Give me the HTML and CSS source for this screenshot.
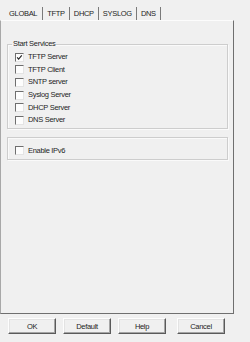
FILE: index.html
```html
<!DOCTYPE html>
<html>
<head>
<meta charset="utf-8">
<link rel="stylesheet" href="styles.css">
</head>
<body>
<div class="dlg">
  <div class="tabs">
    <span class="tab active">GLOBAL</span>
    <span class="tab">TFTP</span>
    <span class="tab">DHCP</span>
    <span class="tab">SYSLOG</span>
    <span class="tab">DNS</span>
  </div>
  <div class="panel">
    <fieldset class="group">
      <legend>Start Services</legend>
      <label class="row"><span class="cb checked"><svg viewBox="0 0 8 8" width="8" height="8"><path d="M1.3 3.8 L3 5.8 L6.6 1.6" fill="none" stroke="#222" stroke-width="1.3"/></svg></span>TFTP Server</label>
      <label class="row"><span class="cb"></span>TFTP Client</label>
      <label class="row"><span class="cb"></span>SNTP server</label>
      <label class="row"><span class="cb"></span>Syslog Server</label>
      <label class="row"><span class="cb"></span>DHCP Server</label>
      <label class="row"><span class="cb"></span>DNS Server</label>
    </fieldset>
    <div class="group g2">
      <label class="row"><span class="cb"></span>Enable IPv6</label>
    </div>
  </div>
  <div class="buttons">
    <button class="btn default">OK</button>
    <button class="btn">Default</button>
    <button class="btn">Help</button>
    <button class="btn cancel">Cancel</button>
  </div>
</div>
</body>
</html>
```
FILE: styles.css
```css
html, body {
  margin: 0;
  padding: 0;
  background: #f0f0f0;
}
body {
  width: 250px;
  height: 342px;
  overflow: hidden;
  font-family: "Liberation Sans", Arial, sans-serif;
  font-size: 7.5px;
  letter-spacing: -0.3px;
  color: #1e1e1e;
}
.dlg {
  width: 250px;
  height: 342px;
  display: flex;
  flex-direction: column;
}
.tabs {
  height: 20px;
  box-sizing: border-box;
  padding: 7px 0 0 9px;
  display: flex;
  align-items: stretch;
}
.tab {
  display: block;
  height: 13px;
  line-height: 13px;
  padding: 0 4px 0 4px;
  border-right: 1px solid #7a7a7a;
}
.tab.active {
  padding-left: 0;
  padding-right: 5px;
}
.panel {
  width: 234px;
  height: 294px;
  box-sizing: border-box;
  border-left: 1px solid #a8a8a8;
  border-right: 1px solid #6f6f6f;
  border-bottom: 1px solid #6f6f6f;
  border-top: 1px solid #fcfcfc;
  padding: 0 5px 0 6px;
}
.group {
  margin: 18px 0 0 0;
  padding: 2px 7px 1px 7px;
  border: 1px solid #cdcdcd;
  box-shadow: inset 1px 1px 0 #fafafa, 1px 1px 0 #fafafa;
  min-width: 0;
}
.group legend {
  padding: 0 1px;
  margin-left: -3px;
  line-height: 10px;
  height: 10px;
}
.g2 {
  margin-top: 8px;
  padding: 7px 7px 2px 7px;
}
.row {
  display: flex;
  align-items: center;
  height: 12.6px;
  line-height: 12px;
}
.g2 .row {
  height: 12px;
}
.cb {
  box-sizing: border-box;
  width: 9px;
  height: 9px;
  margin-right: 4px;
  background: #fdfdfd;
  border-top: 1px solid #6e6e6e;
  border-left: 1px solid #6e6e6e;
  border-right: 1px solid #e4e4e4;
  border-bottom: 1px solid #e4e4e4;
  display: flex;
  align-items: center;
  justify-content: center;
}
.cb svg {
  display: block;
  width: 7px;
  height: 7px;
}
.buttons {
  display: flex;
  gap: 7px;
  padding: 4px 0 0 8px;
}
.btn {
  box-sizing: border-box;
  width: 48px;
  height: 16px;
  padding: 0;
  margin: 0;
  font: inherit;
  letter-spacing: inherit;
  color: #1e1e1e;
  background: #f0f0f0;
  border-top: 1px solid #fdfdfd;
  border-left: 1px solid #fdfdfd;
  border-right: 1px solid #5a5a5a;
  border-bottom: 1px solid #5a5a5a;
  box-shadow: inset -1px -1px 0 #a5a5a5, inset 1px 1px 0 #e3e3e3;
}
.btn.cancel {
  margin-left: 4px;
}
```
